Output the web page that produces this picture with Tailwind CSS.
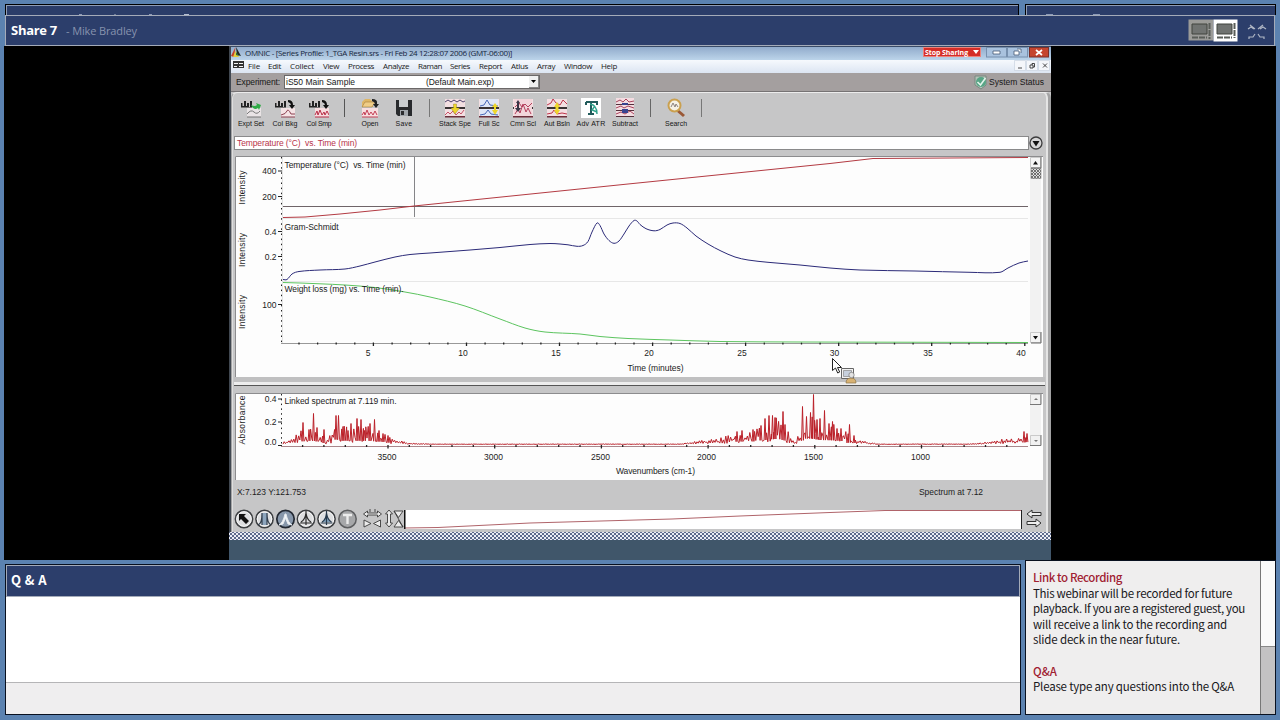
<!DOCTYPE html>
<html lang="en">
<head>
<meta charset="utf-8">
<title>Share 7</title>
<script src="https://cdn.jsdelivr.net/npm/@tailwindcss/browser@4"></script>
</head>
<body class="w-[1280px] h-[720px] overflow-hidden bg-[#5b82b0] font-['Liberation_Sans',sans-serif]">
<svg width="0" height="0" class="absolute">
  <defs>
    <pattern id="weave" width="4" height="4" patternUnits="userSpaceOnUse"><rect width="4" height="4" fill="#eceef6"/><path d="M0 0l4 4M4 0L0 4" stroke="#4d5b80" stroke-width=".9"/></pattern>
    <pattern id="grip" width="3" height="3" patternUnits="userSpaceOnUse"><rect width="3" height="3" fill="#ddd"/><path d="M0 0l3 3M3 0L0 3" stroke="#555" stroke-width=".8"/></pattern>
    <symbol id="bars" viewBox="0 0 20 20"><path d="M0 2h13v8H0z" fill="#c9c5c5"/><path d="M0 9.500V5h1.500v3H3V3h2v5h1V5h2v4h1V3h2v6.500z" fill="#222"/></symbol>
    <symbol id="traces" viewBox="0 0 20 20"><path d="M0 1h20v18H0z" fill="#f3dfe2"/><path d="M0 9h20v2H0z" fill="#3a3335"/><path d="M0 18h20v1.500H0z" fill="#6d2f3b"/></symbol>
    <symbol id="disc" viewBox="0 0 20 20"><circle cx="10" cy="10" r="8.600" fill="#dedfe1" stroke="#3e4043" stroke-width="1.600"/><circle cx="10" cy="10" r="7.300" fill="none" stroke="#f8f8f8" stroke-width="1"/></symbol>
  </defs>
</svg>
<div class="flex flex-col w-[1280px] h-[720px] pt-1">
  <!-- strips of the pods behind the share pod -->
  <div class="flex h-[11px] pl-[5px] gap-[6px] shrink-0">
    <div class="w-[1014px] bg-[#2b3d69] border-t border-x border-black shadow-[inset_1px_1px_0_#8f9db5] flex items-end pl-[73px]">
      <div class="flex w-[110px] justify-between h-px"><i class="w-[3px] bg-[#8c9ab7]"></i><i class="w-[2px] bg-[#6c7a97]"></i><i class="w-[3px] bg-[#8c9ab7]"></i><i class="w-[5px] bg-[#b5bfd3]"></i></div>
    </div>
    <div class="w-[251px] bg-[#2b3d69] border-t border-x border-black shadow-[inset_1px_1px_0_#8f9db5] flex items-end pl-5">
      <div class="flex w-[54px] justify-between h-px"><i class="w-[7px] bg-[#8c9ab7]"></i><i class="w-[7px] bg-[#8c9ab7]"></i></div>
    </div>
  </div>

  <!-- share header -->
  <header class="h-[31px] ml-[5px] w-[1270px] shrink-0 bg-[#2c3e6b] border border-[#a4abb9] flex items-center text-white pl-[5px] pr-[7px]">
    <span data-w="46" class="whitespace-nowrap font-['Open_Sans',sans-serif] font-bold text-[13px] leading-none">Share 7</span>
    <span data-w="71" class="ml-[9px] whitespace-nowrap font-['Open_Sans',sans-serif] text-[11px] leading-none text-[#8793ae]">- Mike Bradley</span>
    <svg class="ml-auto" width="50" height="24" viewBox="1188 19 50 24"><path d="M1188.500 19.500h25v21h-25z" fill="#9b9b98"/><path d="M1213.500 19.500h24v22h-24z" fill="#fff"/><path d="M1192 24h15v10h-15zM1217 24h15v10h-15z" fill="#707371" stroke="#40443f"/><path d="M1209.500 23v16M1192 37.500h15M1234.500 23v15M1217 37.500h15" stroke="#595d58" stroke-width="2" stroke-dasharray="6 1"/></svg>
    <svg class="ml-[9px]" width="20" height="18" viewBox="1247 22 20 18" fill="none" stroke="#b0b7c5" stroke-width="1.200"><path d="M1248 29l3-2 3 2M1260 29l3-2 3 2M1250 25l5 4M1263 25l-5 4M1249 39v-2h4l2-3M1264 39v-2h-4l-2-3"/></svg>
  </header>

  <!-- shared desktop -->
  <div class="h-[514px] ml-[4px] w-[1272px] shrink-0 bg-black pl-[225px]">
    <div class="relative w-[822px] h-[514px] bg-[#40566a] flex flex-col">
      <div class="h-[486px] shrink-0 flex flex-col bg-[#c5c5c6] border-l-2 border-[#414851]">
        <!-- title bar -->
        <div class="h-[14px] shrink-0 bg-linear-to-b from-[#91abcb] to-[#bcd4ea] flex items-center border-t border-[#394a66]">
          <svg class="mb-1" width="10" height="10" viewBox="0 0 10 10"><path d="M4.500 0L0 9l3 1z" fill="#c54023"/><path d="M5 0l5 9-4-1z" fill="#202824"/><path d="M4.500 4L2 10h6z" fill="#e2cd3a"/><path d="M5 5l3 4-3-1z" fill="#2a6b3c"/></svg>
          <span data-w="267" class="ml-[4px] mb-[2px] whitespace-nowrap font-['Open_Sans',sans-serif] text-[8px] leading-none text-[#16263d]">OMNIC - [Series Profile: 1_TGA Resin.srs - Fri Feb 24 12:28:07 2006 (GMT-06:00)]</span>
          <div class="ml-auto mr-[2px] mb-[3px] flex items-center">
            <div class="w-[58px] h-[10px] bg-[#d42d27] border border-[#ee8179] flex items-center text-white"><span data-w="43" class="ml-[1px] whitespace-nowrap font-['Open_Sans',sans-serif] font-bold text-[7px] leading-none">Stop Sharing</span><svg class="ml-[5px]" width="6" height="6" viewBox="0 0 6 6"><path d="M0 1h6L3 5z" fill="#fff"/></svg></div>
            <svg class="ml-[5px]" width="63" height="11" viewBox="987 47 63 11"><rect x="987.500" y="47.500" width="20" height="9.500" fill="#a9c2de" stroke="#7790ae"/><rect x="1008.500" y="47.500" width="20" height="9.500" fill="#a9c2de" stroke="#7790ae"/><rect x="1030.500" y="47.500" width="19" height="9.500" fill="#c5452f" stroke="#7b302a"/><path d="M994 51h7v3h-7zM1015 51h5v4h-5zM1018 49h4v4" fill="#fff" stroke="#455873" stroke-width=".8"/><path d="M1037 50l6 5M1043 50l-6 5" stroke="#fff" stroke-width="1.700"/></svg>
          </div>
        </div>
        <!-- menu bar -->
        <nav class="h-[13px] shrink-0 bg-linear-to-b from-[#f6f9fd] to-[#dce5f2] flex items-center pb-[2px] font-['Open_Sans',sans-serif] text-[8px] leading-none text-[#1b1b22] whitespace-nowrap">
          <svg class="ml-[2px] mr-[4px] mb-[2px]" width="11" height="7" viewBox="0 0 11 7"><path d="M0 0h11v7H0z" fill="#333"/><path d="M1 2h4v1H1zM6 2h4v1H6zM1 5h3v1H1zM6 5h4v1H6z" fill="#f4f4f4"/></svg>
          <div class="w-5"><span data-w="12">File</span></div><div class="w-[22px]"><span data-w="13">Edit</span></div><div class="w-[33px]"><span data-w="24">Collect</span></div><div class="w-[25px]"><span data-w="16">View</span></div><div class="w-[35px]"><span data-w="26">Process</span></div><div class="w-[35px]"><span data-w="26">Analyze</span></div><div class="w-8"><span data-w="24">Raman</span></div><div class="w-[29px]"><span data-w="20">Series</span></div><div class="w-8"><span data-w="23">Report</span></div><div class="w-[26px]"><span data-w="17">Atlus</span></div><div class="w-[27px]"><span data-w="18">Array</span></div><div class="w-[37px]"><span data-w="28">Window</span></div><div><span data-w="16">Help</span></div>
          <svg class="ml-auto mr-[1px]" width="36" height="11" viewBox="1014 61 36 11"><path d="M1014.500 61.500h11v10h-11zM1026.500 61.500h11v10h-11zM1038.500 61.500h11v10h-11z" fill="#f4f6fa" stroke="#c8d2df" stroke-width=".7"/><path d="M1018 69h4M1030 66h3v3h-3zM1032 66v-1.500h2.500V68H1033M1043 64.500l4 4M1047 64.500l-4 4" fill="none" stroke="#333" stroke-width=".9"/></svg>
        </nav>
        <!-- experiment row -->
        <div class="h-[19px] shrink-0 bg-[#a49f9f] flex items-center pl-[5px] text-[8.500px] text-[#181818] whitespace-nowrap leading-none border-b border-[#767374]">
          <span data-w="44">Experiment:</span>
          <div class="ml-1 w-[256px] h-[14px] shrink-0 bg-white border border-[#6b6868] flex items-center">
            <span class="ml-[1px]" data-w="69">iS50 Main Sample</span>
            <span class="ml-[71px]" data-w="68">(Default Main.exp)</span>
            <div class="ml-auto w-[10px] h-[12px] bg-[#f0f0f0] border-r border-b border-[#888] flex items-center justify-center"><svg width="5" height="3"><path d="M0 0h5L2.500 3z"/></svg></div>
          </div>
          <svg class="ml-auto" width="14" height="15" viewBox="0 0 14 15"><path d="M1 1h11v9l-5 4-6-4z" fill="#b4c3b9" stroke="#788980"/><circle cx="7" cy="7" r="5" fill="#58a586"/><path d="M3.500 7l3 3 5-7" fill="none" stroke="#e3f4eb" stroke-width="1.600"/></svg>
          <span class="ml-[1px] mr-[7px]" data-w="55">System Status</span>
        </div>
        <!-- work area -->
        <main class="grow min-h-0 bg-[#c6c6c7] border-l border-[#a2a2a3] border-r-[3px] rounded-tl-md rounded-tr-md border-t border-t-[#ececec] shadow-[inset_-2px_0_0_#e5e5e5,inset_1px_0_0_#dedede] flex flex-col pl-[2px]">
          <!-- toolbar -->
          <div class="h-[43px] shrink-0 flex pt-[5px] text-[7px] leading-none text-[#161616] whitespace-nowrap">
            <div class="w-[34px] flex flex-col items-center"><svg width="20" height="20" viewBox="0 0 20 20"><use href="#bars" width="20" height="20"/><path d="M6 10h14v9H6z" fill="#e9e4e5"/><path d="M6 16q4-5 7-2t6-1M6 19h14" fill="none" stroke="#777"/><path d="M10 7q4 2 6 0l-1-2 5 2-2 5-1-2q-4 3-7-3z" fill="#30ab45"/></svg><span class="mt-[2px]" data-w="26">Expt Set</span></div>
            <div class="w-[34px] flex flex-col items-center"><svg width="20" height="20" viewBox="0 0 20 20"><use href="#bars" width="20" height="20"/><path d="M6 10h14v9H6z" fill="#f5e3e5"/><path d="M6 17q5-1 6-4t4 3h4M6 19h14" fill="none" stroke="#8b4050"/><path d="M13 2q5 0 5 5h2l-3 4-3-4h2q0-2-3-3z" fill="#111"/></svg><span class="mt-[2px]" data-w="25">Col Bkg</span></div>
            <div class="w-[34px] flex flex-col items-center"><svg width="20" height="20" viewBox="0 0 20 20"><use href="#bars" width="20" height="20"/><path d="M6 10h14v9H6z" fill="#f7dcdf"/><path d="M6 17l2-4 1 4 2-5 2 5 2-3 1 3 2-4 2 4M6 19h14" fill="none" stroke="#b72d46"/><path d="M13 2q5 0 5 5h2l-3 4-3-4h2q0-2-3-3z" fill="#111"/></svg><span class="mt-[2px]" data-w="25">Col Smp</span></div>
            <div class="w-[17px] flex justify-center"><div class="w-px h-[18px] mt-[1px] bg-[#555]"></div></div>
            <div class="w-[34px] flex flex-col items-center"><svg width="20" height="20" viewBox="0 0 20 20"><path d="M2 10h16v9H2z" fill="#f8dee0"/><path d="M2 17l2-3 1 3 2-5 2 5 2-3 2 3 2-4 2 4M2 19h16" fill="none" stroke="#c33e55"/><path d="M2 4l3-3h5l3 3v5H2z" fill="#dfb665"/><path d="M2 9l3-5h10l-3 5z" fill="#f0cd87" stroke="#966d32" stroke-width=".5"/><path d="M12 1q6 0 5 5h2l-3 4-3-4h2q0-2-3-3z" fill="#222"/></svg><span class="mt-[2px]" data-w="17">Open</span></div>
            <div class="w-[34px] flex flex-col items-center"><svg width="20" height="20" viewBox="0 0 20 20"><path d="M2 2h16v16H4l-2-2z" fill="#282a2d"/><path d="M5 2h9v7H5z" fill="#c9cdd0"/><path d="M6 12h8v6H6z" fill="#a1a6ab"/><path d="M7 13h3v4H7z" fill="#2b2c2e"/></svg><span class="mt-[2px]" data-w="17">Save</span></div>
            <div class="w-[17px] flex justify-center"><div class="w-px h-[18px] mt-[1px] bg-[#777]"></div></div>
            <div class="w-[34px] flex flex-col items-center"><svg width="20" height="20" viewBox="0 0 20 20"><use href="#traces" width="20" height="20"/><path d="M0 4l3-2 3 2 3-2 3 2 3-2 3 2 2-1" fill="none" stroke="#4d426c"/><path d="M0 17l3-3 2 2 3-3 3 4 3-3 2 2 3-4" fill="none" stroke="#c65367"/><path d="M8.500 6h3v4h3L10 16l-4-6h2.500z" fill="#eed62b" stroke="#8d7d2b" stroke-width=".4"/></svg><span class="mt-[2px]" data-w="32">Stack Spe</span></div>
            <div class="w-[34px] flex flex-col items-center"><svg width="20" height="20" viewBox="0 0 20 20"><use href="#traces" width="20" height="20"/><path d="M1 1h18v8H1zM1 11h18v7H1z" fill="#dfe6f7"/><path d="M1 8l4-1 3-5 3 5 8 1M1 17l5-1 3-4 3 4 7 1" fill="none" stroke="#4968b8"/><path d="M16 5l3 4h-2v3h2l-3 5-3-5h2V9h-2z" fill="#eed62b"/></svg><span class="mt-[2px]" data-w="21">Full Sc</span></div>
            <div class="w-[34px] flex flex-col items-center"><svg width="20" height="20" viewBox="0 0 20 20"><use href="#traces" width="20" height="20"/><path d="M1 1h18v17H1z" fill="#f2d6db"/><path d="M2 16l3-5 2 4 3-9 3 8 2-4 3 6M2 9l4-4 3 4 3-3 3 3 4-4" fill="none" stroke="#b4405c"/><path d="M5 2l2 3H6v5h2l-3 4-3-4h2V5H3z" fill="#393445"/></svg><span class="mt-[2px]" data-w="26">Cmn Scl</span></div>
            <div class="w-[34px] flex flex-col items-center"><svg width="20" height="20" viewBox="0 0 20 20"><use href="#traces" width="20" height="20"/><path d="M0 7l4-2 2-4 3 4 4 2 3-5 4 4M0 16l5-1 2-3 3 4 5-1 5 1" fill="none" stroke="#bd354b"/><path d="M10 4l3 5h-1.500v3h1.500l-3 5-3-5h1.500V9H7z" fill="#eed62b"/></svg><span class="mt-[2px]" data-w="26">Aut Bsln</span></div>
            <div class="w-[34px] flex flex-col items-center"><svg width="20" height="20" viewBox="0 0 20 20"><path d="M0 0h20v20H0z" fill="#fff"/><path d="M5 4h11v3M5 4v3M10 4v12M7 16h6" fill="none" stroke="#225b5b" stroke-width="2"/><path d="M9 6q7 1 7 10M14 8l-3 4 5 2" fill="none" stroke="#2fa38c" stroke-width="1.400"/></svg><span class="mt-[2px]" data-w="29">Adv ATR</span></div>
            <div class="w-[34px] flex flex-col items-center"><svg width="20" height="20" viewBox="0 0 20 20"><path d="M1 0h18v19H1z" fill="#f3dce1"/><path d="M1 4l4-2 3 2 3-3 3 3 5-1M1 10l5-2 3 2 4-2 6 2M1 16l5-2 4 2 5-3 4 3" fill="none" stroke="#a8435c"/><path d="M1 6h18v1H1zM1 12h18v1H1zM1 18h18v1H1z" fill="#54303c"/><path d="M7 5h6v2H7zM7 11h6v4H7z" fill="#394390"/></svg><span class="mt-[2px]" data-w="26">Subtract</span></div>
            <div class="w-[17px] flex justify-center"><div class="w-px h-[18px] mt-[1px] bg-[#666]"></div></div>
            <div class="w-[34px] flex flex-col items-center"><svg width="20" height="20" viewBox="0 0 20 20"><path d="M12 11l7 6-2 2-7-6z" fill="#9a5836"/><circle cx="8.500" cy="7.500" r="6" fill="#f6f1e5" stroke="#caa04f" stroke-width="2"/><path d="M5 9l2-4 2 4 1-3 2 3" fill="none" stroke="#8c8380"/></svg><span class="mt-[2px]" data-w="22">Search</span></div>
            <div class="w-[17px] flex justify-center"><div class="w-px h-[18px] mt-[1px] bg-[#777]"></div></div>
          </div>
          <!-- data set selector -->
          <div class="h-[14px] shrink-0 flex items-center">
            <div class="w-[795px] h-[14px] bg-white border border-[#8a8a8b] flex items-center pl-[2px] text-[8.500px] leading-none text-[#b8344a] whitespace-nowrap"><span data-w="120">Temperature (°C)&nbsp; vs. Time (min)</span></div>
            <svg width="14" height="14" viewBox="0 0 14 14"><circle cx="7" cy="7" r="6" fill="#d6d6d7" stroke="#3c3c3d" stroke-width="1.300"/><path d="M3.500 5h7L7 10.500z" fill="#111"/></svg>
          </div>
          <!-- profile charts -->
          <svg class="mt-[6px] ml-px shrink-0 bg-[#fdfdfd]" width="808" height="221" viewBox="235 156 808 221" font-family="'Liberation Sans', sans-serif" font-size="8.500" fill="#1c1c1c">
            <path d="M235.500 377V156.500H1044" fill="none" stroke="#8c8c8e"/>
            <rect x="1030" y="157" width="11" height="186" fill="#f2f2f2"/>
            <path d="M282 218.500H1028M282 281.500H1028" stroke="#e7e7e7"/>
            <path d="M281.500 157V343" stroke="#222" stroke-dasharray="1.500 3.600"/><path d="M282.500 157V343" stroke="#d2d2d2" stroke-width=".6"/>
            <path d="M278 171h4M278 196.500h4M278 231.500h4M278 256.500h4M278 304.500h4" stroke="#222" stroke-width="1.200"/>
            <path d="M281 343.500H1028" stroke="#999"/>
            <g id="timeTicks"></g>
            <path d="M414.500 157V217" stroke="#858588"/><path d="M283 206.500H1028" stroke="#6f6468"/>
            <g fill="none" stroke-width="1">
              <path d="M283 217.500L305 217 340 214 380 210 414 206 628 184 830 163.500 873 158.500 949 158 1028 157.500" stroke="#b33a42"/>
              <path id="gs" stroke="#2b2a78"/>
              <path id="wl" stroke="#5cc45f"/>
            </g>
            <text x="284.500" y="167.500" textLength="121" xml:space="preserve">Temperature (°C)  vs. Time (min)</text>
            <text x="284.500" y="230" textLength="54">Gram-Schmidt</text>
            <text x="284.500" y="292" textLength="119">Weight loss (mg) vs. Time (min).</text>
            <g text-anchor="end"><text x="276.500" y="174">400</text><text x="276.500" y="199.500">200</text><text x="276.500" y="234.500">0.4</text><text x="276.500" y="259.500">0.2</text><text x="276.500" y="308">100</text></g>
            <g text-anchor="middle"><text transform="translate(245 187.500) rotate(-90)" textLength="34">Intensity</text><text transform="translate(245 250) rotate(-90)" textLength="34">Intensity</text><text transform="translate(245 312) rotate(-90)" textLength="34">Intensity</text>
            <text x="368" y="356">5</text><text x="463" y="356">10</text><text x="556" y="356">15</text><text x="649" y="356">20</text><text x="742" y="356">25</text><text x="834.500" y="356">30</text><text x="928" y="356">35</text><text x="1021" y="356">40</text>
            <text x="655.500" y="371" textLength="56">Time (minutes)</text></g>
            <path d="M1030.500 157.500h10v10h-10zM1030.500 332.500h10v10h-10z" fill="#f5f5f5" stroke="#cacaca"/><path d="M1041 157v11h-10M1041 332v11h-10" fill="none" stroke="#666"/>
            <path d="M1033 164.500h5l-2.500-3.500zM1033 336h5l-2.500 3.500z" fill="#111"/>
            <rect x="1031" y="168.500" width="10" height="10" fill="url(#grip)" stroke="#777" stroke-width=".6"/>
          </svg>
          <div class="h-[10px] shrink-0 w-[811px] flex flex-col"><div class="h-[5px] bg-[#c0c0c1]"></div><div class="h-[3px] bg-[#ededed]"></div><div class="h-px bg-[#555]"></div></div>
          <!-- linked spectrum -->
          <svg class="mt-[6px] ml-px shrink-0 bg-[#fdfdfd]" width="808" height="87" viewBox="235 393 808 87" font-family="'Liberation Sans', sans-serif" font-size="8.500" fill="#1c1c1c">
            <path d="M235.500 480V393.500H1044" fill="none" stroke="#8c8c8e"/>
            <rect x="1030" y="394" width="11" height="52" fill="#f2f2f2"/>
            <path d="M281.500 394V446" stroke="#222" stroke-dasharray="1.500 3.300"/>
            <path d="M278 399h4M278 422h4M278 445.500h4" stroke="#222" stroke-width="1.200"/>
            <path d="M281 446.500H1028" stroke="#a8878c"/>
            <g id="waveTicks"></g>
            <path id="spec" fill="none" stroke="#bb2029" stroke-width="1"/>
            <text x="284.500" y="404" textLength="112">Linked spectrum at 7.119 min.</text>
            <g text-anchor="end"><text x="276.500" y="402">0.4</text><text x="276.500" y="425">0.2</text><text x="276.500" y="445">0.0</text></g>
            <g text-anchor="middle"><text transform="translate(245 420) rotate(-90)" textLength="49">Absorbance</text>
            <text x="387" y="459.500">3500</text><text x="493.500" y="459.500">3000</text><text x="600.500" y="459.500">2500</text><text x="706.500" y="459.500">2000</text><text x="813.500" y="459.500">1500</text><text x="920.500" y="459.500">1000</text>
            <text x="655.500" y="474" textLength="79">Wavenumbers (cm-1)</text></g>
            <path d="M1030.500 394.500h10v10h-10zM1030.500 435.500h10v10h-10z" fill="#f1f1f1" stroke="#cacaca"/><path d="M1041 394v10.500h-11M1041 435v10.500h-11" fill="none" stroke="#777"/>
            <path d="M1034 400h4l-2-2zM1034 440h4l-2 2z" fill="#777"/>
          </svg>
          <!-- readouts -->
          <div class="h-[28px] shrink-0 flex items-center justify-between pl-[3px] pb-[3px] pr-[65px] text-[8.500px] leading-none text-[#1d1d1d] whitespace-nowrap"><span data-w="69">X:7.123 Y:121.753</span><span data-w="64">Spectrum at 7.12</span></div>
          <!-- view tools -->
          <div class="h-[22px] shrink-0 flex items-center">
            <svg width="170" height="22" viewBox="234 508 170 22" fill="none">
              <use href="#disc" x="234" y="509" width="20" height="20"/><use href="#disc" x="254.500" y="509" width="20" height="20"/><circle cx="285.500" cy="519" r="8.700" fill="#8797ab" stroke="#222832" stroke-width="1.700"/><use href="#disc" x="296" y="509" width="20" height="20"/><use href="#disc" x="316.500" y="509" width="20" height="20"/><circle cx="347.500" cy="519" r="8.700" fill="#a6a7a9" stroke="#5d5e60" stroke-width="1.500"/>
              <path d="M239 514h7l-2 2 5 5-3 3-5-5-2 2z" fill="#111"/>
              <path d="M262 513h5v12h-5z" fill="#8da5bd"/><path d="M258 525q4-1 4-12v12M267 513q0 10 4 12M267 513v12" stroke="#333f4e" stroke-width="1.200"/>
              <path d="M279 525q4-2 6-11h1q2 9 6 11l-4-1-2.500-6-2.500 6z" fill="#f4f7fa" stroke="#e6ebf0"/>
              <path d="M300 523h12M306 511v14M301 522q4-2 5-9q1 7 5 9" stroke="#2c2c2c" stroke-width="1.200"/>
              <path d="M322 522q3-3 4.500-9q1 6 5 9z" fill="#7fa0bb"/><path d="M320.500 523h12M326.500 511v14M322 522q4-2 4.500-9q1 7 5 9" stroke="#27384a" stroke-width="1.200"/>
              <path d="M343 515h9M347.500 515v9" stroke="#ececec" stroke-width="2.400"/>
              <g fill="#ececec" stroke="#3b3b3b" stroke-width=".9"><path d="M363.500 514l4-3v2h10v-2l4 3-4 3v-2h-10v2zM364 520v7l7-3.500zM380.500 520v7l-7-3.500zM389 510l3.500 4h-2v9h2l-3.500 4-3.500-4h2v-9h-2zM394 511h9l-4.500 6.500zM394 527h9l-4.500-6.500z"/><path d="M370 509v3M375 509v3M394 511l9 16"/></g>
            </svg>
            <svg class="bg-white" width="618" height="19" viewBox="404 510 618 19"><path d="M404 528L438 527.500 530 523 672 519 740 516 830 512.500 885 510.500H1021" fill="none" stroke="#b0646a"/><path d="M404.500 510v19" stroke="#111" stroke-width="2"/><path d="M1021.500 510v19" stroke="#222"/></svg>
            <svg class="ml-[4px]" width="16" height="20" viewBox="0 0 16 20" fill="#eee" stroke="#333" stroke-width="1"><path d="M1 5l5-4v2.500h9v3H6V9zM15 14l-5-4v2.500H1v3h9V18z"/></svg>
          </div>
        </main>
      </div>
      <svg class="shrink-0" width="822" height="8"><rect width="822" height="8" fill="url(#weave)"/></svg>
      <!-- mouse pointer with presenter badge -->
      <svg class="absolute left-[602px] top-[311px]" width="28" height="28" viewBox="831 357 28 28"><path d="M832.500 358.500v12l3-2.500 2.200 5 2-1-2.200-4.500h4z" fill="#fff" stroke="#222"/><path d="M841.500 368.500h12v10h-12z" fill="#f2f2f2" stroke="#666"/><path d="M843.500 370.500h8v6h-8z" fill="#c7d0dd" stroke="#888" stroke-width=".7"/><path d="M846 383q0-5 5-5t5 5z" fill="#d8b273" stroke="#8c7448" stroke-width=".7"/><circle cx="851.500" cy="375" r="2.700" fill="#e3e3e3" stroke="#777" stroke-width=".7"/></svg>
    </div>
  </div>

  <!-- lower pods -->
  <div class="flex pl-[5px] h-[160px] shrink-0">
    <section class="mt-[4px] w-[1016px] h-[151px] border border-[#08101f] bg-white flex flex-col">
      <div class="h-[32px] shrink-0 bg-[#2c3e6b] border border-[#a4abb9] flex items-center pl-1 pb-[3px]"><span data-w="36" class="whitespace-nowrap font-['Noto_Sans_CJK_JP',sans-serif] font-bold text-[13px] leading-none text-white">Q &amp; A</span></div>
      <div class="grow"></div>
      <div class="h-[32px] shrink-0 bg-[#efeeef] border-t border-[#b5b5b7]"></div>
    </section>
    <section class="ml-[4px] w-[251px] h-[155px] border border-[#08101f] bg-[#efeeee] flex">
      <div class="w-[234px] pl-[7px] pt-[9px] font-['Noto_Sans_CJK_JP',sans-serif] text-[11.500px] leading-[15.600px] text-[#17171a] whitespace-nowrap">
        <p class="font-medium text-[#a02031]"><span data-w="89">Link to Recording</span></p>
        <p><span data-w="199">This webinar will be recorded for future</span></p>
        <p><span data-w="212">playback. If you are a registered guest, you</span></p>
        <p><span data-w="194">will receive a link to the recording and</span></p>
        <p><span data-w="147">slide deck in the near future.</span></p>
        <p>&nbsp;</p>
        <p class="font-medium text-[#a02031]"><span data-w="24">Q&amp;A</span></p>
        <p><span data-w="201">Please type any questions into the Q&amp;A</span></p>
      </div>
      <div class="grow border-l border-[#777] bg-[#c3c2c3]"><div class="h-[86px] bg-[#fafafa] border-b border-[#888]"></div></div>
    </section>
  </div>
</div>
<script>
// Adjust tracking so each label fills its intended measure; redo it whenever styles change the page size.
const fit = () => document.querySelectorAll('[data-w]').forEach(e => {
  e.style.letterSpacing = '0px';
  const n = e.textContent.length, w = e.getBoundingClientRect().width;
  e.style.letterSpacing = ((+e.dataset.w - w) / n).toFixed(3) + 'px';
});
new ResizeObserver(fit).observe(document.body);
addEventListener('load', () => { fit(); requestAnimationFrame(fit); });
// Smooth curve through the sampled points.
const smooth = p => {
  let d = `M${p[0]}`;
  for (let i = 0; i < p.length - 1; i++) {
    const a = p[i - 1] || p[i], b = p[i], c = p[i + 1], e = p[i + 2] || c;
    const s = (c[0] - b[0]) / 3;
    const m = (u, v) => v[0] === u[0] ? 0 : (v[1] - u[1]) / (v[0] - u[0]);
    d += `C${b[0] + s} ${b[1] + m(a, c) * s} ${c[0] - s} ${c[1] - m(b, e) * s} ${c[0]} ${c[1]}`;
  }
  return d;
};
document.getElementById('gs').setAttribute('d', smooth([[283,279.5],[287,279.5],[292,274],[299,271.5],[320,270],[345,269],[360,266],[375,262],[395,257],[410,254.5],[430,253],[470,250],[500,247.5],[530,244.5],[550,243.5],[560,244],[568,244.8],[577,246.3],[583,245.5],[588,241.5],[592,232],[597,223],[600,225.5],[604,234],[609,240.5],[614,243.3],[619,241],[624,234],[629,226],[634,220.5],[637,221],[640,224.5],[646,228.7],[654,230.8],[660,229.5],[667,225],[673,223],[680,223.5],[687,228],[696,236],[708,244],[721,251],[735,257],[748,260],[768,262.3],[800,265],[830,268],[860,270],[915,271],[970,272.3],[1000,272.3],[1008,268],[1019,263],[1028,261]]));
document.getElementById('wl').setAttribute('d', smooth([[283,282.5],[300,283],[320,283.8],[345,285],[375,287.5],[405,292],[430,297],[465,306],[500,319],[525,328],[545,332],[580,334],[600,336.5],[628,338.5],[670,340],[720,341.5],[800,342],[1028,342.5]]));
const ticks = (x0, step, n, major, y) => {
  let s = '';
  for (let i = 0; i < n; i++) s += `<path d="M${(x0 + i * step).toFixed(1)} ${y}v${i % 5 === major ? 3.5 : 2}" stroke="#222" stroke-width="1.3"/>`;
  return s;
};
document.getElementById('timeTicks').innerHTML = ticks(299, 18.61, 40, 4, 342.5);
document.getElementById('waveTicks').innerHTML = ticks(302.6, 21.34, 34, 4, 445);
// Absorbance spectrum: envelope of background lines plus the named bands.
const env = [[283,5],[290,8],[300,20],[312,25],[320,18],[325,8],[331,16],[337,36],[343,25],[356,25],[370,24],[382,18],[390,10],[400,5],[415,2],[430,.8],[680,.8],[700,6],[720,9],[740,20],[752,20],[770,34],[778,38],[786,26],[790,10],[795,3],[798,12],[806,40],[812,40],[820,30],[832,28],[843,22],[850,12],[860,7],[870,3],[880,.7],[970,1],[990,4],[1003,8],[1016,9],[1027,16]];
const peaks = [[303,22],[309,15],[313.5,31],[317,17],[324,15],[336,29],[338.5,29],[343,18],[348,14],[351,21],[357,26],[361,25],[364.5,14],[370,21],[374.5,25],[379,14],[383,11],[388,9],[737,13],[742,14],[753,15],[761,19],[765,26],[769,29],[772.5,29],[775,27],[783,33],[785,20],[802.5,38],[806.5,28],[810.5,32],[813.5,50],[817,25],[820,26],[824.5,34],[829,21],[832.5,23],[837,16],[841,16],[849.5,20],[854,9],[1024,13],[1027,11]];
const envAt = x => { for (let i = 1; i < env.length; i++) if (x <= env[i][0]) { const [a, b] = [env[i-1], env[i]]; return a[1] + (b[1] - a[1]) * (x - a[0]) / (b[0] - a[0]); } return 0; };
let seed = 11; const rnd = () => (seed = (seed * 16807) % 2147483647) / 2147483647;
const pts = [];
for (let x = 283, k = 0; x < 1027; x += 1.2, k++) {
  if (peaks.some(p => Math.abs(p[0] - x) < 1)) continue;
  const h = envAt(x); pts.push([x, k % 2 ? h * (.3 + rnd() * .45) : h * (.08 + rnd() * .25)]);
}
peaks.forEach(p => pts.push([p[0] - .9, envAt(p[0]) * .15], p, [p[0] + .9, envAt(p[0]) * .15]));
pts.sort((a, b) => a[0] - b[0]);
document.getElementById('spec').setAttribute('d', 'M' + pts.map(p => p[0].toFixed(1) + ' ' + (444.5 - p[1]).toFixed(1)).join('L'));
</script>
</body>
</html>
